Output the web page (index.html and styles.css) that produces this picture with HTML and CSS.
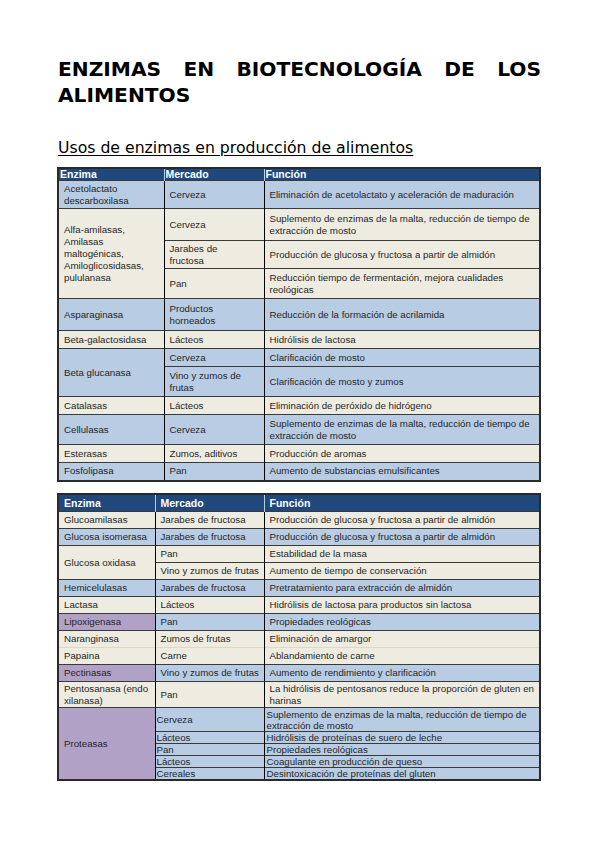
FILE: index.html
```html
<!DOCTYPE html>
<html lang="es">
<head>
<meta charset="utf-8">
<title>Enzimas en biotecnología de los alimentos</title>
<link rel="stylesheet" href="styles.css">
</head>
<body>
<div class="page">
  <h1 class="title">ENZIMAS EN BIOTECNOLOGÍA DE LOS ALIMENTOS</h1>
  <h2 class="subtitle">Usos de enzimas en producción de alimentos</h2>

  <table class="tbl tbl1">
    <colgroup><col class="c1a"><col class="c2a"><col class="c3"></colgroup>
    <thead>
      <tr class="hd1"><th>Enzima</th><th>Mercado</th><th>Función</th></tr>
    </thead>
    <tbody>
      <tr class="blue h28"><td>Acetolactato descarboxilasa</td><td>Cerveza</td><td>Eliminación de acetolactato y aceleración de maduración</td></tr>
      <tr class="beige h32"><td rowspan="3">Alfa-amilasas, Amilasas maltogénicas, Amiloglicosidasas, pululanasa</td><td>Cerveza</td><td>Suplemento de enzimas de la malta, reducción de tiempo de extracción de mosto</td></tr>
      <tr class="beige h28"><td class="narrow">Jarabes de fructosa</td><td>Producción de glucosa y fructosa a partir de almidón</td></tr>
      <tr class="beige h30"><td>Pan</td><td>Reducción tiempo de fermentación, mejora cualidades reológicas</td></tr>
      <tr class="blue h32"><td>Asparaginasa</td><td>Productos horneados</td><td>Reducción de la formación de acrilamida</td></tr>
      <tr class="beige h18"><td>Beta-galactosidasa</td><td>Lácteos</td><td>Hidrólisis de lactosa</td></tr>
      <tr class="blue h18"><td rowspan="2">Beta glucanasa</td><td>Cerveza</td><td>Clarificación de mosto</td></tr>
      <tr class="blue h30"><td>Vino y zumos de frutas</td><td>Clarificación de mosto y zumos</td></tr>
      <tr class="beige h18"><td>Catalasas</td><td>Lácteos</td><td>Eliminación de peróxido de hidrógeno</td></tr>
      <tr class="blue h30"><td>Cellulasas</td><td>Cerveza</td><td>Suplemento de enzimas de la malta, reducción de tiempo de extracción de mosto</td></tr>
      <tr class="beige h18"><td>Esterasas</td><td>Zumos, aditivos</td><td>Producción de aromas</td></tr>
      <tr class="blue h18"><td>Fosfolipasa</td><td>Pan</td><td>Aumento de substancias emulsificantes</td></tr>
    </tbody>
  </table>

  <table class="tbl tbl2">
    <colgroup><col class="c1b"><col class="c2b"><col class="c3"></colgroup>
    <thead>
      <tr class="hd2"><th>Enzima</th><th>Mercado</th><th>Función</th></tr>
    </thead>
    <tbody>
      <tr class="beige h17"><td>Glucoamilasas</td><td>Jarabes de fructosa</td><td>Producción de glucosa y fructosa a partir de almidón</td></tr>
      <tr class="blue h17"><td>Glucosa isomerasa</td><td>Jarabes de fructosa</td><td>Producción de glucosa y fructosa a partir de almidón</td></tr>
      <tr class="beige h17"><td rowspan="2">Glucosa oxidasa</td><td>Pan</td><td>Estabilidad de la masa</td></tr>
      <tr class="beige h17"><td class="nowrap">Vino y zumos de frutas</td><td>Aumento de tiempo de conservación</td></tr>
      <tr class="blue h17"><td>Hemicelulasas</td><td>Jarabes de fructosa</td><td>Pretratamiento para extracción de almidón</td></tr>
      <tr class="beige h17"><td>Lactasa</td><td>Lácteos</td><td>Hidrólisis de lactosa para productos sin lactosa</td></tr>
      <tr class="blue h17"><td class="purple">Lipoxigenasa</td><td>Pan</td><td>Propiedades reológicas</td></tr>
      <tr class="beige h17 nob"><td>Naranginasa</td><td>Zumos de frutas</td><td>Eliminación de amargor</td></tr>
      <tr class="beige h17"><td>Papaina</td><td>Carne</td><td>Ablandamiento de carne</td></tr>
      <tr class="blue h17"><td class="purple">Pectinasas</td><td class="nowrap">Vino y zumos de frutas</td><td>Aumento de rendimiento y clarificación</td></tr>
      <tr class="beige h26"><td>Pentosanasa (endo xilanasa)</td><td>Pan</td><td>La hidrólisis de pentosanos reduce la proporción de gluten en harinas</td></tr>
      <tr class="blue h24 pro"><td rowspan="5" class="purple">Proteasas</td><td>Cerveza</td><td>Suplemento de enzimas de la malta, reducción de tiempo de extracción de mosto</td></tr>
      <tr class="blue h12 pro"><td>Lácteos</td><td>Hidrólisis de proteínas de suero de leche</td></tr>
      <tr class="blue h12 pro"><td>Pan</td><td>Propiedades reológicas</td></tr>
      <tr class="blue h12 pro"><td>Lácteos</td><td>Coagulante en producción de queso</td></tr>
      <tr class="blue h12 pro"><td>Cereales</td><td>Desintoxicación de proteínas del gluten</td></tr>
    </tbody>
  </table>
</div>
</body>
</html>
```

FILE: styles.css
```css
html, body {
  margin: 0;
  padding: 0;
  background: #ffffff;
}

.page {
  width: 484px;
  padding: 56px 0 0 57px;
  font-family: "DejaVu Sans", sans-serif;
  color: #000;
}

.title {
  margin: 0;
  font-family: "DejaVu Sans", sans-serif;
  font-weight: bold;
  font-size: 20.2px;
  line-height: 26px;
  text-align: justify;
  padding-left: 1px;
}

.subtitle {
  margin: 31px 0 10px 1px;
  font-family: "DejaVu Sans", sans-serif;
  font-weight: normal;
  font-size: 15.7px;
  line-height: 18px;
  text-decoration: underline;
  text-underline-offset: 2px;
}

.tbl {
  width: 484px;
  table-layout: fixed;
  border-collapse: collapse;
  font-family: "Liberation Sans", Arial, sans-serif;
  font-size: 9.7px;
  line-height: 12px;
  color: #262626;
  border: 2px solid #2a2a2a;
}

.tbl1 { margin-bottom: 11px; }

.c1a { width: 106px; }
.c2a { width: 100px; }
.c1b { width: 97px; }
.c2b { width: 109px; }
.c3 { width: auto; }

.tbl th {
  background: #1f497d;
  color: #ffffff;
  font-weight: bold;
  text-align: left;
  padding: 0 2px;
  border-left: 1px solid #b8cce4;
  font-size: 10.5px;
}

.tbl th:first-child { border-left: none; }

.hd1 { height: 12px; }
.hd1 th { line-height: 11px; padding: 0 1px; }
.hd2 { height: 18px; }
.hd2 th { padding: 0 5px; }

.tbl td {
  padding: 0 5px;
  vertical-align: middle;
  border-top: 1px solid #3a3a3a;
  border-left: 1px solid #000;
  overflow: hidden;
}

.tbl td:first-child { border-left: none; }
.tbl td[rowspan] { border-right: 1px solid #000; }
.tbl td.nowrap { white-space: nowrap; }
.tbl td.narrow { padding-right: 20px; }

.blue td { background: #b8cce4; }
.beige td { background: #eeece1; }
.tbl td.purple { background: #b2a1c7; }

.nob td { border-bottom: none; }
.nob + tr td { border-top: 1px solid #ddd9c4; }

.h12 { height: 12px; }
.h17 { height: 17px; }
.h18 { height: 18px; }
.h24 { height: 24px; }
.h26 { height: 26px; }
.h28 { height: 28px; }
.h30 { height: 30px; }
.h32 { height: 32px; }

.pro td { padding: 0 1px; line-height: 11px; }
.pro td.purple { padding: 0 5px; }
.pro td:last-child { padding-left: 2px; }
```
